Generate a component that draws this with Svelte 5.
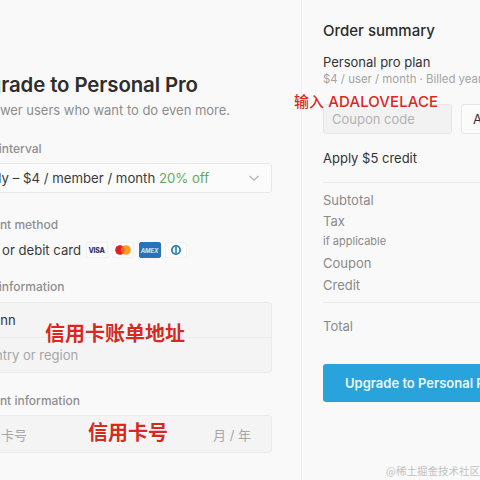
<script>
  const cards = ['visa', 'mc', 'amex', 'diners'];
  const rows = [
    { text: 'Subtotal', cls: 'r1' },
    { text: 'Tax', cls: 'r2' },
    { text: 'if applicable', cls: 'r3' },
    { text: 'Coupon', cls: 'r4' },
    { text: 'Credit', cls: 'r5' }
  ];
</script>

<div class="page">
  <main class="left">
    <div class="inner">
      <h1>Upgrade to Personal Pro</h1>
      <p class="sub">For power users who want to do even more.</p>

      <div class="label l1">Billing interval</div>
      <div class="select">
        <span>Yearly – $4 / member / month <em>20% off</em></span>
        <svg width="12" height="12" viewBox="0 0 12 12"><path d="M1.5 4 L6 8.2 L10.5 4" fill="none" stroke="#b4b4b4" stroke-width="1.3"/></svg>
      </div>

      <div class="label l2">Payment method</div>
      <div class="method">
        <span class="mtext">Credit or debit card</span>
        {#each cards as c}
          <span class="card {c}">
            {#if c === 'visa'}
              <b>VISA</b>
            {:else if c === 'mc'}
              <svg width="16" height="10" viewBox="0 0 16 10"><circle cx="5" cy="5" r="4.8" fill="#e0201c"/><circle cx="11" cy="5" r="4.8" fill="#f59e1f"/><path d="M8 1.2a4.8 4.8 0 0 1 0 7.6a4.8 4.8 0 0 1 0-7.6" fill="#f0641c"/></svg>
            {:else if c === 'amex'}
              <i>AMEX</i>
            {:else}
              <svg width="12" height="12" viewBox="0 0 12 12"><circle cx="6" cy="6" r="5" fill="#2a7fa8"/><circle cx="6" cy="6" r="3.2" fill="#f2f8fb"/><rect x="5.2" y="3" width="1.6" height="6" fill="#2a7fa8"/></svg>
            {/if}
          </span>
        {/each}
      </div>

      <div class="label l3">Billing information</div>
      <div class="box billing">
        <div class="cell name">Johann</div>
        <div class="cell country">Country or region</div>
      </div>

      <div class="label l4">Payment information</div>
      <div class="box cardbox">
        <span class="ph">信用卡号</span>
        <span class="ph">月 / 年</span>
      </div>
    </div>
  </main>

  <aside class="right">
    <h2>Order summary</h2>
    <div class="plan">Personal pro plan</div>
    <div class="price">$4 / user / month · Billed yearly</div>
    <div class="coupon">
      <div class="cinput">Coupon code</div>
      <div class="capply">Apply</div>
    </div>
    <div class="credit">Apply $5 credit</div>
    <div class="rows">
      {#each rows as r}
        <div class="row {r.cls}">{r.text}</div>
      {/each}
    </div>
    <div class="total">Total</div>
    <div class="cta">Upgrade to Personal Pro</div>
  </aside>

  <div class="note n1">信用卡账单地址</div>
  <div class="note n2">信用卡号</div>
  <div class="note n3">输入 ADALOVELACE</div>
  <div class="mark">@稀土掘金技术社区</div>
</div>

<style>
  :global(body) { margin: 0; }
  .page {
    position: relative;
    display: flex;
    width: 480px;
    height: 480px;
    overflow: hidden;
    background: #f9f9f9;
    color: #2b2b2b;
    font-family: Inter, "Noto Sans CJK SC", sans-serif;
  }
  .left {
    flex: 0 0 302px;
    width: 302px;
    min-width: 0;
    box-sizing: border-box;
    border-right: 1px solid #efefef;
    display: flex;
    justify-content: flex-end;
    padding-right: 29px;
  }
  .inner { flex: 0 0 311px; width: 311px; min-width: 0; padding-top: 73px; }
  h1 { margin: 0; font-size: 20.4px; line-height: 24px; font-weight: 600; color: #2d2d2d; white-space: nowrap; letter-spacing: -0.1px; }
  .sub { margin: 0; padding-top: 5px; font-size: 13px; line-height: 17px; color: #8d8d8d; white-space: nowrap; letter-spacing: -0.02px; }
  .label { font-size: 12px; line-height: 14px; font-weight: 500; color: #8f8f8f; white-space: nowrap; }
  .l1 { margin-top: 23px; }
  .l2 { margin-top: 25px; }
  .l3 { margin-top: 19px; }
  .l4 { margin-top: 21px; }
  .select {
    margin-top: 7px; height: 30px; box-sizing: border-box;
    border: 1px solid #e8e8e8; border-radius: 3px; background: #fbfbfb;
    display: flex; align-items: center; justify-content: space-between;
    padding: 0 11px 0 8px; font-size: 13.2px; white-space: nowrap; color: #3a3a3a;
  }
  em { font-style: normal; color: #65a85e; }
  .method { margin-top: 7px; height: 22px; display: flex; align-items: center; gap: 4.5px; font-size: 13.1px; white-space: nowrap; color: #3a3a3a; }
  .mtext { margin-right: 0; }
  .card { flex: none; width: 22px; height: 16px; border-radius: 2px; background: #fdfdfd; border: 1px solid #f0f0f0; box-sizing: border-box; display: flex; align-items: center; justify-content: center; }
  .card b { font-size: 7px; font-weight: 800; color: #2c3a6b; letter-spacing: -0.3px; }
  .amex { background: #2a72b8; border-color: #2a72b8; }
  .amex i { font-size: 6px; color: #cfe3f5; font-weight: 700; letter-spacing: -0.2px; }
  .box { border: 1px solid #ebebeb; border-radius: 3px; background: #f4f4f4; box-sizing: border-box; }
  .billing { margin-top: 8px; height: 71px; display: flex; flex-direction: column; }
  .cell { flex: 1; display: flex; align-items: center; padding-left: 8px; font-size: 13px; white-space: nowrap; }
  .name { color: #333; }
  .country { color: #a6a6a6; border-top: 1px solid #ebebeb; }
  .cardbox { margin-top: 7px; height: 38px; display: flex; align-items: center; justify-content: space-between; padding: 0 20px 0 13px; }
  .ph { font-size: 13px; color: #a6a6a6; white-space: nowrap; }

  .right { flex: 1; min-width: 0; padding: 21px 0 0 21px; white-space: nowrap; }
  h2 { margin: 0; font-size: 15px; line-height: 20px; font-weight: 500; color: #2b2b2b; }
  .plan { margin-top: 12px; font-size: 13px; line-height: 18px; color: #333; }
  .price { margin-top: -1px; font-size: 11.4px; line-height: 18px; color: #a4a4a4; }
  .coupon { margin-top: 16px; display: flex; gap: 9px; }
  .cinput { flex: 0 0 129px; box-sizing: border-box; height: 30px; padding-left: 8px; border: 1px solid #e6e6e6; border-radius: 3px; background: #f2f2f2; color: #b2b2b2; font-size: 13px; line-height: 28px; }
  .capply { flex: 0 0 60px; box-sizing: border-box; height: 30px; padding-left: 11px; border: 1px solid #e6e6e6; border-radius: 3px; background: #fbfbfb; color: #333; font-size: 13px; line-height: 28px; }
  .credit { margin-top: 15px; font-size: 13px; line-height: 18px; color: #333; padding-bottom: 15px; border-bottom: 1px solid #ececec; }
  .rows { padding-top: 8px; }
  .row { font-size: 13px; line-height: 18px; color: #8a8a8a; }
  .r2 { margin-top: 3px; }
  .r3 { margin-top: 2px; font-size: 11px; }
  .r4 { margin-top: 4px; }
  .r5 { margin-top: 4px; padding-bottom: 8px; border-bottom: 1px solid #ececec; }
  .total { margin-top: 14px; font-size: 13px; line-height: 18px; color: #8a8a8a; }
  .cta { margin-top: 29px; height: 38px; width: 190px; box-sizing: border-box; padding-left: 22px; border-radius: 3px; background: #29a3dc; color: #eaf6fc; font-size: 13px; font-weight: 600; line-height: 38px; }

  .note { position: absolute; font-weight: 700; white-space: nowrap; color: #d9281e; text-shadow: 1px 1px 1px #fff; }
  .n1 { left: 45px; top: 322px; font-size: 20px; line-height: 24px; }
  .n2 { left: 88px; top: 421px; font-size: 20px; line-height: 24px; }
  .n3 { left: 294px; top: 93px; font-size: 15px; line-height: 17px; font-weight: 500; letter-spacing: 0.1px; }
  .mark { position: absolute; left: 386px; top: 464px; font-size: 10.5px; line-height: 14px; color: #c2c2c2; font-family: "Noto Sans CJK SC", sans-serif; white-space: nowrap; }
</style>
